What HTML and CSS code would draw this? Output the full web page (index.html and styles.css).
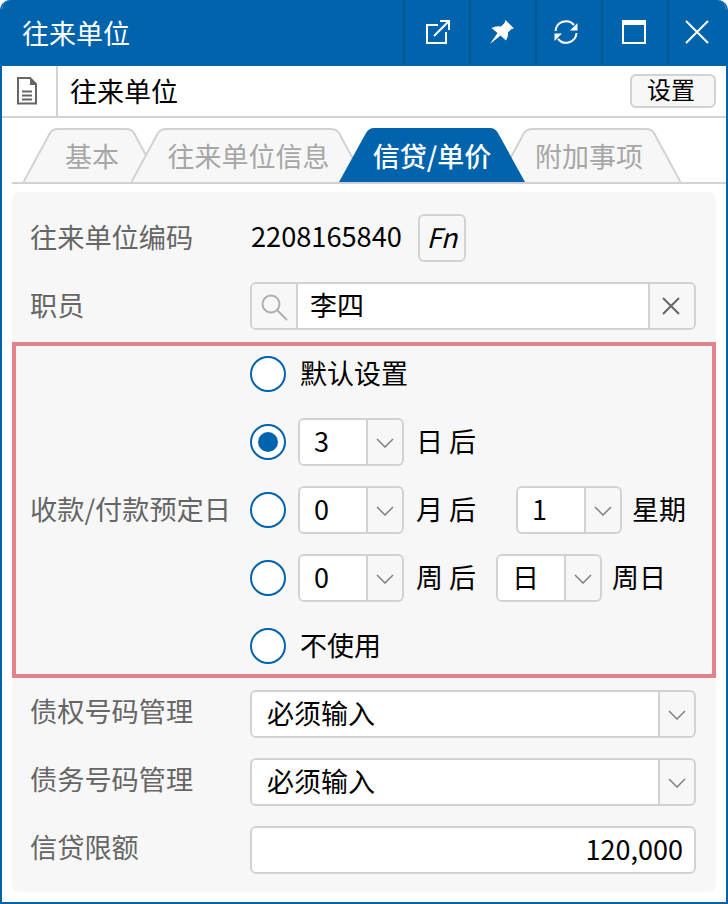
FILE: index.html
```html
<!DOCTYPE html>
<html lang="zh-CN">
<head>
  <meta charset="UTF-8">
  <title>往来单位</title>
  <link rel="stylesheet" href="styles.css">
</head>
<body>
  <div class="window">
    <div class="titlebar">
      <div class="title">往来单位</div>
      <div class="title-btn title-btn-open">
        <svg width="24" height="24" viewBox="0 0 24 24" fill="none" stroke="#fff" stroke-width="2"><path d="M12 5H1V23H20V12"/><path d="M8 16L22 2"/><path d="M14 1H23V10"/></svg>
      </div>
      <div class="title-btn">
        <svg width="24" height="24" viewBox="0 0 24 24" fill="#fff"><path d="M15.500 0L24 8.500L21.500 9L18 12.500Q18.500 17 16 20.500L10.500 15.500L0 24L7.500 13L1.500 8Q6 5.500 11 6.500L14.500 3Z"/></svg>
      </div>
      <div class="title-btn title-btn-refresh">
        <svg width="24" height="24" viewBox="0 0 24 24" fill="none" stroke="#fff" stroke-width="2"><path d="M1.5 11A10.5 10.5 0 0 1 20 5"/><path d="M23.5 3V10.5H16Z" fill="#fff" stroke="none"/><g transform="rotate(180 12 12)"><path d="M1.5 11A10.5 10.5 0 0 1 20 5"/><path d="M23.5 3V10.5H16Z" fill="#fff" stroke="none"/></g></svg>
      </div>
      <div class="title-btn">
        <svg width="24" height="24" viewBox="0 0 24 24" fill="#fff"><path d="M0 0H24V24H0ZM2 5V22H22V5Z" fill-rule="evenodd"/></svg>
      </div>
      <div class="title-btn title-btn-close">
        <svg width="24" height="24" viewBox="0 0 24 24" fill="none" stroke="#fff" stroke-width="2"><path d="M1 1L23 23M23 1L1 23"/></svg>
      </div>
    </div>

    <div class="toolbar">
      <div class="toolbar-icon">
        <svg width="20" height="28" viewBox="0 0 20 28" fill="none" stroke="#666" stroke-width="2"><path d="M1 1H13L19 7V26.5H1Z"/><path d="M13 0V8H20Z" fill="#666" stroke="none"/><path d="M5 14.5H15M5 18.5H15M5 22.5H15"/></svg>
      </div>
      <div class="toolbar-title">往来单位</div>
      <button class="settings-btn">设置</button>
    </div>

    <div class="tabs">
      <div class="tab tab-basic">
        <svg class="tab-shape" width="138" height="54"><path d="M0.5 54L27 5Q30 1 35 1H103Q108 1 111 5L137.5 54"/></svg>
        <span class="tab-label">基本</span>
      </div>
      <div class="tab tab-info">
        <svg class="tab-shape" width="235" height="54"><path d="M0.5 54L27 5Q30 1 35 1H200Q205 1 208 5L234.5 54"/></svg>
        <span class="tab-label">往来单位信息</span>
      </div>
      <div class="tab tab-credit active">
        <svg class="tab-shape" width="186" height="54"><path d="M0 54L27 5Q30 0 35 0H151Q156 0 159 5L186 54Z"/></svg>
        <span class="tab-label">信贷/单价</span>
      </div>
      <div class="tab tab-extra">
        <svg class="tab-shape" width="184" height="54"><path d="M0.5 54L27 5Q30 1 35 1H149Q154 1 157 5L183.5 54"/></svg>
        <span class="tab-label">附加事项</span>
      </div>
    </div>

    <div class="panel">
      <div class="row">
        <div class="label">往来单位编码</div>
        <div class="value">2208165840</div>
        <button class="fn-btn">Fn</button>
      </div>

      <div class="row">
        <div class="label">职员</div>
        <div class="field">
          <div class="addon addon-left">
            <svg width="30" height="30" viewBox="0 0 30 30" fill="none" stroke="#b0b0b0" stroke-width="2"><circle cx="12" cy="12" r="8.5"/><path d="M18 18L28 28"/></svg>
          </div>
          <div class="field-text">李四</div>
          <div class="addon addon-right">
            <svg width="18" height="18" viewBox="0 0 18 18" fill="none" stroke="#666" stroke-width="2"><path d="M1 1L17 17M17 1L1 17"/></svg>
          </div>
        </div>
      </div>

      <div class="highlight">
        <div class="label">收款/付款预定日</div>
        <div class="choices">
          <div class="choice">
            <span class="radio"></span>
            <span class="choice-text">默认设置</span>
          </div>
          <div class="choice">
            <span class="radio checked"></span>
            <div class="select">
              <div class="select-value">3</div>
              <div class="select-arrow"><svg class="chevron" width="18" height="10" viewBox="0 0 18 10"><path d="M1 1L9 9L17 1"/></svg></div>
            </div>
            <span class="unit">日 后</span>
          </div>
          <div class="choice">
            <span class="radio"></span>
            <div class="select">
              <div class="select-value">0</div>
              <div class="select-arrow"><svg class="chevron" width="18" height="10" viewBox="0 0 18 10"><path d="M1 1L9 9L17 1"/></svg></div>
            </div>
            <span class="unit">月 后</span>
            <div class="select select-month">
              <div class="select-value">1</div>
              <div class="select-arrow"><svg class="chevron" width="18" height="10" viewBox="0 0 18 10"><path d="M1 1L9 9L17 1"/></svg></div>
            </div>
            <span class="unit">星期</span>
          </div>
          <div class="choice">
            <span class="radio"></span>
            <div class="select">
              <div class="select-value">0</div>
              <div class="select-arrow"><svg class="chevron" width="18" height="10" viewBox="0 0 18 10"><path d="M1 1L9 9L17 1"/></svg></div>
            </div>
            <span class="unit">周 后</span>
            <div class="select select-week">
              <div class="select-value">日</div>
              <div class="select-arrow"><svg class="chevron" width="18" height="10" viewBox="0 0 18 10"><path d="M1 1L9 9L17 1"/></svg></div>
            </div>
            <span class="unit">周日</span>
          </div>
          <div class="choice">
            <span class="radio"></span>
            <span class="choice-text">不使用</span>
          </div>
        </div>
      </div>

      <div class="row row-raised">
        <div class="label">债权号码管理</div>
        <div class="select select-wide">
          <div class="select-value">必须输入</div>
          <div class="select-arrow"><svg class="chevron" width="18" height="10" viewBox="0 0 18 10"><path d="M1 1L9 9L17 1"/></svg></div>
        </div>
      </div>

      <div class="row row-raised">
        <div class="label">债务号码管理</div>
        <div class="select select-wide">
          <div class="select-value">必须输入</div>
          <div class="select-arrow"><svg class="chevron" width="18" height="10" viewBox="0 0 18 10"><path d="M1 1L9 9L17 1"/></svg></div>
        </div>
      </div>

      <div class="row row-raised">
        <div class="label">信贷限额</div>
        <div class="field field-number">120,000</div>
      </div>
    </div>
  </div>
</body>
</html>
```

FILE: styles.css
```css
* { box-sizing: border-box; }
html, body { margin: 0; padding: 0; }
body { font-family: "Noto Sans CJK SC", "Noto Sans", sans-serif; font-size: 27px; line-height: 1; color: #000; background-color: #fff; }
svg { display: block; }
button { font-family: inherit; padding: 0; color: #000; }

.window { width: 728px; height: 904px; border: 2px solid #0063ac; border-top: 0; border-radius: 10px 10px 0 0; background-color: #fff; overflow: hidden; }

.titlebar { display: flex; align-items: stretch; height: 66px; margin: 0 -2px; background-color: #0063ac; color: #fff; }
.title { flex: 1; padding-left: 22px; line-height: 66px; }
.title-btn { display: flex; align-items: center; justify-content: center; width: 66px; height: 64px; padding-right: 2px; border-left: 2px solid #00568f; }
.title-btn-open svg { margin-left: 4px; }
.title-btn-refresh svg { margin-right: 4px; }
.title-btn-close { width: 61px; padding-right: 4px; }

.toolbar { display: flex; align-items: center; height: 52px; border-bottom: 2px solid #d2d2d2; }
.toolbar-icon { display: flex; align-items: center; justify-content: center; width: 56px; height: 50px; padding-right: 4px; border-right: 2px solid #d2d2d2; }
.toolbar-title { flex: 1; padding: 0 0 2px 12px; }
.settings-btn { width: 86px; height: 34px; margin-right: 10px; padding: 0 4px 4px 0; border: 2px solid #d2d2d2; border-radius: 6px; background-color: #f7f7f7; font-size: 24px; line-height: 24px; }

.tabs { display: flex; height: 66px; margin-left: 10px; padding: 10px 0 0 11px; border-bottom: 2px solid #d2d2d2; }
.tab { position: relative; display: flex; align-items: center; justify-content: center; height: 54px; color: #a6a6a6; }
.tab-shape { position: absolute; left: 0; top: 0; fill: #f7f7f7; stroke: #d2d2d2; stroke-width: 2; }
.tab-label { position: relative; }
.tab-basic { width: 138px; z-index: 1; }
.tab-info { width: 235px; margin-left: -30px; z-index: 2; }
.tab-credit { width: 186px; margin-left: -27px; z-index: 4; }
.tab-extra { width: 184px; margin-left: -28px; z-index: 3; }
.tab.active { color: #fff; font-weight: 500; }
.tab.active .tab-shape { fill: #0063ac; stroke: none; }

.panel { height: 700px; margin: 8px 10px 0; padding-top: 22px; border-radius: 8px; background-color: #f7f7f7; }
.row { display: flex; align-items: center; height: 48px; margin-bottom: 20px; padding: 0 20px 0 18px; }
.label { flex: none; width: 220px; padding-bottom: 2px; font-size: 27.2px; color: #666; }
.row-raised .label { padding-bottom: 6px; }
.value { flex: none; margin-left: 1px; padding-bottom: 4px; font-size: 27.2px; }

.fn-btn { width: 48px; height: 48px; margin-left: 16px; padding-bottom: 4px; border: 2px solid #d2d2d2; border-radius: 6px; background-color: #f7f7f7; font-size: 27px; font-style: italic; }

.field { display: flex; flex: 1; align-items: stretch; height: 48px; border: 2px solid #d2d2d2; border-radius: 6px; background-color: #fff; overflow: hidden; }
.field-text { display: flex; flex: 1; align-items: center; padding: 0 0 4px 12px; }
.field-number { align-items: center; justify-content: flex-end; padding: 0 11px 4px 0; }
.addon { display: flex; flex: none; align-items: center; justify-content: center; background-color: #f7f7f7; }
.addon-left { width: 46px; padding-top: 2px; border-right: 2px solid #d2d2d2; }
.addon-right { width: 46px; padding-right: 2px; border-left: 2px solid #d2d2d2; }

.highlight { display: flex; align-items: center; height: 336px; margin-top: -8px; margin-bottom: 12px; padding: 4px 20px 4px 14px; border: 4px solid #e0838b; }
.choices { display: flex; flex-direction: column; gap: 20px; }
.choice { display: flex; align-items: center; height: 48px; }
.choice-text { margin-left: 2px; padding-bottom: 4px; }
.radio { flex: none; width: 36px; height: 36px; margin-right: 12px; border: 2px solid #0063ac; border-radius: 50%; background-color: #fff; }
.radio.checked { position: relative; }
.radio.checked::after { content: ""; position: absolute; left: 6px; top: 6px; width: 20px; height: 20px; border-radius: 50%; background-color: #0063ac; }

.select { display: flex; flex: none; width: 106px; height: 48px; border: 2px solid #d2d2d2; border-radius: 6px; background-color: #f7f7f7; overflow: hidden; }
.select-value { display: flex; flex: 1; align-items: center; padding: 0 0 4px 14px; background-color: #fff; }
.select-arrow { display: flex; flex: none; align-items: center; justify-content: center; width: 36px; padding-top: 2px; border-left: 2px solid #d2d2d2; }
.select-wide { flex: 1; width: auto; }
.select-wide .select-value { padding-left: 15px; }
.select-month { margin-left: 40px; }
.select-week { margin-left: 20px; }
.unit { margin-left: 12px; padding-bottom: 4px; white-space: pre; }
.select-month + .unit, .select-week + .unit { margin-left: 10px; }
.chevron { fill: none; stroke: #808080; stroke-width: 1.5; }
```
